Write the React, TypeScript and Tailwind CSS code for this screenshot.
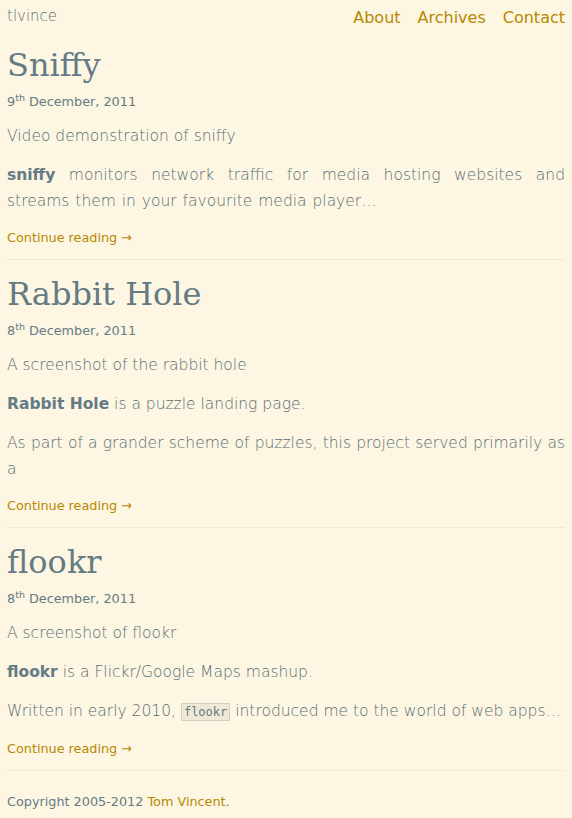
import React from "react";

const sans = { fontFamily: '"DejaVu Sans", sans-serif' };

type Para = { content: React.ReactNode; extra?: string };

function Post({ title, day, sup, lead, paras }: { title: string; day: string; sup: string; lead: string; paras: Para[] }) {
  return (
    <article className="border-b border-[#eee8d5] pb-[11px]">
      <h2 className="text-[32px] leading-[44px] text-[#657b83] pt-[12px]" style={{ fontFamily: '"DejaVu Serif", serif' }}>{title}</h2>
      <p className="text-[12.8px] leading-[20px] mt-[5px]">{day}<sup className="text-[9.5px]">{sup}</sup> December, 2011</p>
      <p className="text-[15.5px] leading-[26px] mt-[11px] font-light text-[#586e75]">{lead}</p>
      {paras.map((p, i) => (
        <p key={i} className={`text-[15.5px] leading-[26px] mt-[13px] text-justify font-light text-[#586e75] ${p.extra ?? ""}`}>{p.content}</p>
      ))}
      <p className="text-[12.8px] leading-[20px] mt-[14px]"><a className="text-[#b58900]" href="#">Continue reading →</a></p>
    </article>
  );
}

export default function App() {
  return (
    <div className="min-h-[818px] bg-[#fdf6e3] text-[#657b83] px-[7px]" style={sans}>
      <header className="flex justify-between items-start mb-[3px]">
        <div className="text-[15px] leading-[20px] pt-[6px] font-light text-[#586e75]">tlvince</div>
        <nav className="flex gap-[17px] text-[16px] leading-[20px] pt-[8px] text-[#b58900]">
          <a href="#">About</a>
          <a href="#">Archives</a>
          <a href="#">Contact</a>
        </nav>
      </header>
      <Post
        title="Sniffy"
        day="9"
        sup="th"
        lead="Video demonstration of sniffy"
        paras={[
          {
            content: <><strong className="font-bold text-[#657b83]">sniffy</strong> monitors network traffic for media hosting websites and streams them in your favourite media player…</>,
            extra: "[word-spacing:1px]",
          },
        ]}
      />
      <Post
        title="Rabbit Hole"
        day="8"
        sup="th"
        lead="A screenshot of the rabbit hole"
        paras={[
          { content: <><strong className="font-bold text-[#657b83]">Rabbit Hole</strong> is a puzzle landing page.</> },
          { content: <>As part of a grander scheme of puzzles, this project served primarily as a</> },
        ]}
      />
      <Post
        title="flookr"
        day="8"
        sup="th"
        lead="A screenshot of flookr"
        paras={[
          { content: <><strong className="font-bold text-[#657b83]">flookr</strong> is a Flickr/Google Maps mashup.</> },
          {
            content: <>Written in early 2010, <code className="text-[12px] bg-[#eee8d5] border border-[#d3cfc0] px-[2px] py-[1px] font-normal text-[#657b83]" style={{ fontFamily: '"DejaVu Sans Mono", monospace' }}>flookr</code> introduced me to the world of web apps…</>,
          },
        ]}
      />
      <footer className="text-[12.8px] leading-[20px] pt-[21px] pb-[8px]">
        Copyright 2005-2012 <a className="text-[#b58900]" href="#">Tom Vincent</a>.
      </footer>
    </div>
  );
}
